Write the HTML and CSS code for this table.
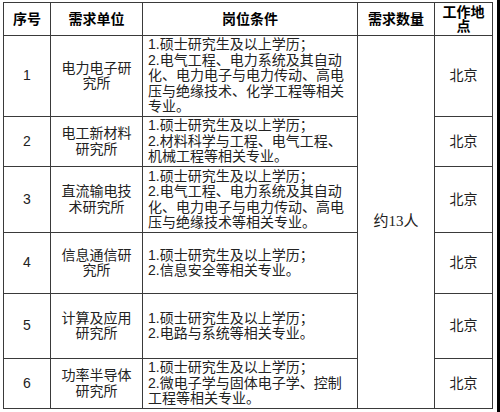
FILE: index.html
```html
<!DOCTYPE html>
<html lang="zh">
<head>
<meta charset="utf-8">
<link rel="stylesheet" href="styles.css">
</head>
<body>
<div class="page">
<table class="jobs">
  <colgroup>
    <col class="c-no">
    <col class="c-unit">
    <col class="c-cond">
    <col class="c-num">
    <col class="c-loc">
  </colgroup>
  <thead>
    <tr class="r-head">
      <th>序号</th>
      <th>需求单位</th>
      <th>岗位条件</th>
      <th>需求数量</th>
      <th class="loc-head">工作地点</th>
    </tr>
  </thead>
  <tbody>
    <tr class="r1">
      <td class="center">1</td>
      <td class="center">电力电子研究所</td>
      <td class="cond">1.硕士研究生及以上学历；<br>2.电气工程、电力系统及其自动化、电力电子与电力传动、高电压与绝缘技术、化学工程等相关专业。</td>
      <td class="center count" rowspan="6">约13人</td>
      <td class="center">北京</td>
    </tr>
    <tr class="r2">
      <td class="center">2</td>
      <td class="center">电工新材料研究所</td>
      <td class="cond">1.硕士研究生及以上学历；<br>2.材料科学与工程、电气工程、机械工程等相关专业。</td>
      <td class="center">北京</td>
    </tr>
    <tr class="r3">
      <td class="center">3</td>
      <td class="center">直流输电技术研究所</td>
      <td class="cond">1.硕士研究生及以上学历；<br>2.电气工程、电力系统及其自动化、电力电子与电力传动、高电压与绝缘技术等相关专业。</td>
      <td class="center">北京</td>
    </tr>
    <tr class="r4">
      <td class="center">4</td>
      <td class="center">信息通信研究所</td>
      <td class="cond">1.硕士研究生及以上学历；<br>2.信息安全等相关专业。</td>
      <td class="center">北京</td>
    </tr>
    <tr class="r5">
      <td class="center">5</td>
      <td class="center">计算及应用研究所</td>
      <td class="cond">1.硕士研究生及以上学历；<br>2.电路与系统等相关专业。</td>
      <td class="center">北京</td>
    </tr>
    <tr class="r6">
      <td class="center">6</td>
      <td class="center">功率半导体研究所</td>
      <td class="cond">1.硕士研究生及以上学历；<br>2.微电子学与固体电子学、控制工程等相关专业。</td>
      <td class="center">北京</td>
    </tr>
  </tbody>
</table>
</div>
</body>
</html>
```
FILE: styles.css
```css
html, body {
  margin: 0;
  padding: 0;
  background: #fff;
}

.page {
  width: 500px;
  height: 412px;
  border-right: 3px solid #000;
  padding: 2px 0 0 3px;
  box-sizing: border-box;
}

.jobs {
  border-collapse: collapse;
  table-layout: fixed;
  width: 490px;
  font-family: "Liberation Sans", "Noto Sans CJK SC", sans-serif;
  font-size: 14px;
  line-height: 15.5px;
  color: #222;
}

.c-no { width: 47px; }
.c-unit { width: 92px; }
.c-cond { width: 215px; }
.c-num { width: 77px; }
.c-loc { width: 58px; }

.jobs th,
.jobs td {
  border: 1px solid #3a3a3a;
  padding: 0 5px;
  vertical-align: middle;
}

.jobs th {
  font-weight: bold;
  color: #000;
  text-align: center;
  line-height: 14px;
}

.loc-head {
  padding: 0 4px;
}

.center {
  text-align: center;
}

.count {
  font-family: "Liberation Serif", "Noto Sans CJK SC", serif;
  font-size: 15px;
}

.cond {
  text-align: left;
  padding: 0 4px;
}

.r-head { height: 33px; }
.r1 { height: 81px; }
.r2 { height: 50px; }
.r3 { height: 66px; }
.r4 { height: 61px; }
.r5 { height: 65px; }
.r6 { height: 50px; }
```
